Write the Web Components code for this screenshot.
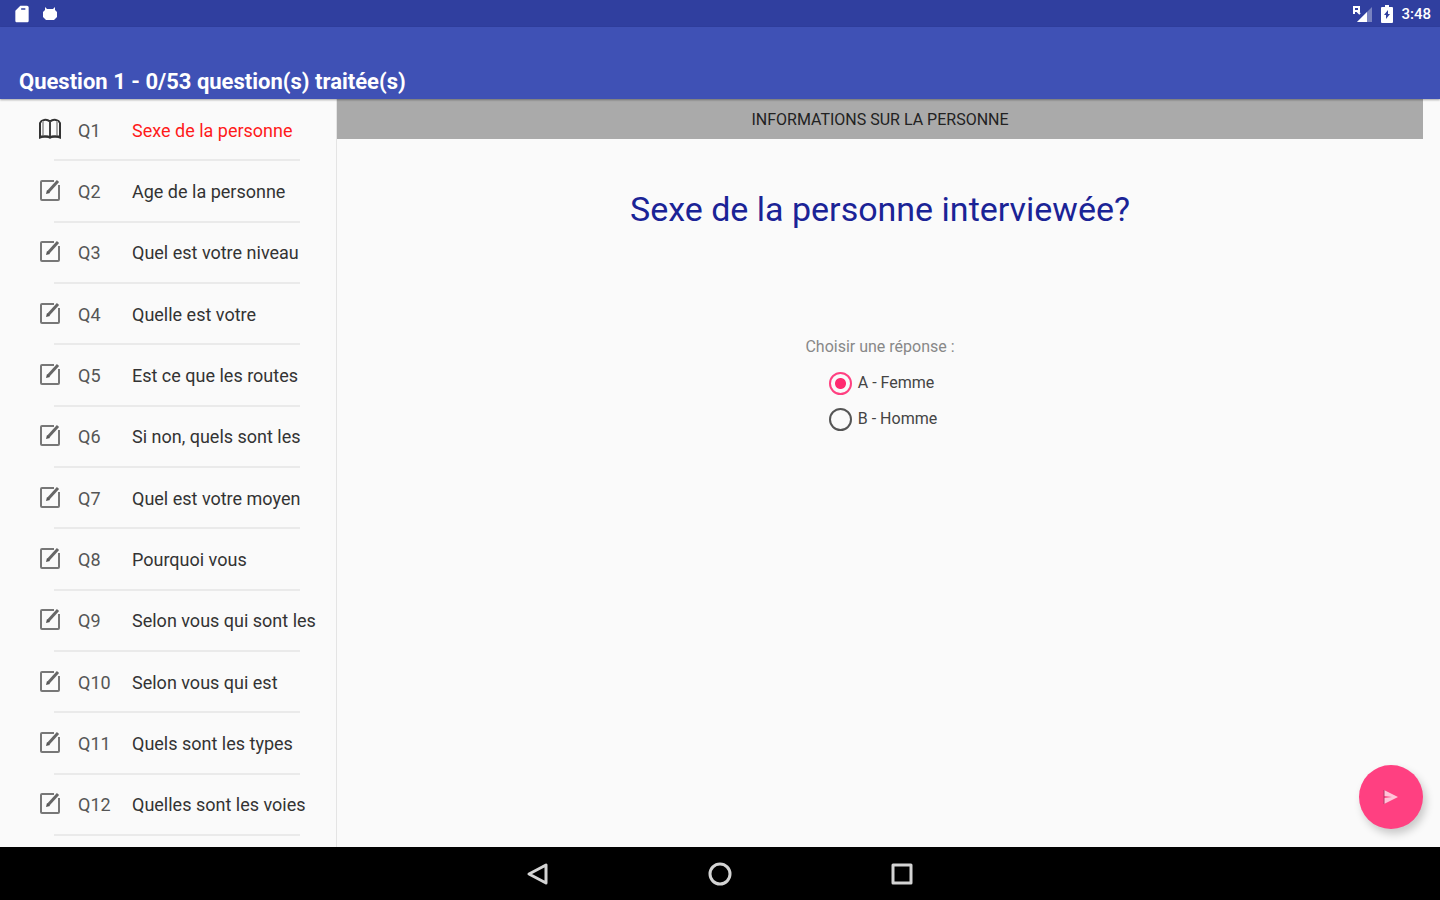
<!DOCTYPE html>
<html lang="fr">
<head>
<meta charset="utf-8">
<meta name="viewport" content="width=device-width, initial-scale=1">
<title>Questionnaire</title>
<style>
    body {
        margin: 0;
        font-family: Roboto, "Liberation Sans", sans-serif;
        color: #333;
        background: #fafafa;
    }
</style>
</head>
<body>
<survey-app>
    <status-bar slot="status" time="3:48"></status-bar>
    <app-bar slot="bar">Question 1 - 0/53 question(s) traitée(s)</app-bar>
    <question-list slot="list">
        <question-item code="Q1" current>Sexe de la personne</question-item>
        <question-item code="Q2">Age de la personne</question-item>
        <question-item code="Q3">Quel est votre niveau</question-item>
        <question-item code="Q4">Quelle est votre</question-item>
        <question-item code="Q5">Est ce que les routes</question-item>
        <question-item code="Q6">Si non, quels sont les</question-item>
        <question-item code="Q7">Quel est votre moyen</question-item>
        <question-item code="Q8">Pourquoi vous</question-item>
        <question-item code="Q9">Selon vous qui sont les</question-item>
        <question-item code="Q10">Selon vous qui est</question-item>
        <question-item code="Q11">Quels sont les types</question-item>
        <question-item code="Q12">Quelles sont les voies</question-item>
    </question-list>
    <question-panel slot="panel" section="INFORMATIONS SUR LA PERSONNE">
        <span slot="title">Sexe de la personne interviewée?</span>
        <answer-group label="Choisir une réponse :" options="A - Femme|B - Homme"></answer-group>
    </question-panel>
    <send-button slot="action"></send-button>
    <nav-bar slot="nav"></nav-bar>
</survey-app>

<script>
function render(host, html) {
    const template = document.createElement('template');
    template.innerHTML = html;
    host.attachShadow({ mode: 'open' });
    host.shadowRoot.appendChild(template.content.cloneNode(true));
}

class SurveyApp extends HTMLElement {
    constructor() {
        super();
        render(this, `
            <style>
                :host {
                    display: flex;
                    flex-direction: column;
                    height: 100vh;
                }
                .body {
                    flex: 1;
                    min-height: 0;
                    display: flex;
                    position: relative;
                }
                ::slotted([slot="panel"]) {
                    flex: 1;
                }
            </style>
            <slot name="status"></slot>
            <slot name="bar"></slot>
            <div class="body">
                <slot name="list"></slot>
                <slot name="panel"></slot>
                <slot name="action"></slot>
            </div>
            <slot name="nav"></slot>
        `);
    }
}

class StatusBar extends HTMLElement {
    constructor() {
        super();
        render(this, `
            <style>
                :host {
                    display: flex;
                    align-items: center;
                    justify-content: space-between;
                    height: 27px;
                    padding: 0 9px 0 12px;
                    background: #303f9f;
                    color: #fff;
                }
                div {
                    display: flex;
                    align-items: center;
                    gap: 10px;
                }
                .right {
                    gap: 8px;
                }
                svg {
                    display: block;
                    fill: #fff;
                }
                time {
                    font-size: 15px;
                    font-weight: 500;
                    line-height: 20px;
                }
            </style>
            <div>
                <svg width="20" height="20" viewBox="0 0 24 24"><path fill-rule="evenodd" d="M18 2h-8L4 8v12c0 1.100.9 2 2 2h12c1.100 0 2-.9 2-2V4c0-1.100-.9-2-2-2zM11 5h5v2h-5z"/></svg>
                <svg width="16" height="16" viewBox="0 0 16 16"><path d="M3 1l2 2h6l2-2v3l2 2v5l-2 2-1 1H4l-1-1-2-2V6l2-2z"/></svg>
            </div>
            <div class="right">
                <svg width="20" height="18" viewBox="0 0 20 18"><path d="M19 2v15H4z" opacity=".35"/><path d="M14 7v10H4z"/><path d="M1 9V2h5v4H2M4 6l3 3" fill="none" stroke="#fff" stroke-width="2"/></svg>
                <svg width="12" height="18" viewBox="0 0 12 18"><path fill-rule="evenodd" d="M4 0h4v2h3q1 0 1 1v14q0 1-1 1H1q-1 0-1-1V3q0-1 1-1h3zM7 5l-4 5h2v4l4-5H7z"/></svg>
                <time></time>
            </div>
        `);
    }

    connectedCallback() {
        this.shadowRoot.querySelector('time').textContent = this.getAttribute('time');
    }
}

class AppBar extends HTMLElement {
    constructor() {
        super();
        render(this, `
            <style>
                :host {
                    display: block;
                    position: relative;
                    z-index: 1;
                    padding: 41px 19px 3px;
                    background: #3f51b5;
                    color: #fff;
                    box-shadow: 0 1px 2px rgba(0, 0, 0, .35);
                }
                h1 {
                    margin: 0;
                    font-size: 22px;
                    font-weight: 700;
                    line-height: 28px;
                }
            </style>
            <h1><slot></slot></h1>
        `);
    }
}

class QuestionList extends HTMLElement {
    constructor() {
        super();
        render(this, `
            <style>
                :host {
                    display: flex;
                    flex-direction: column;
                    box-sizing: border-box;
                    width: 337px;
                    padding: 1px 0 11px;
                    border-right: 1px solid #e4e4e4;
                }
                ::slotted(*) {
                    flex: 1;
                }
            </style>
            <slot></slot>
        `);
        this.setAttribute('role', 'list');
    }
}

const BOOK = '<svg width="24" height="24" viewBox="0 0 24 24"><path d="M12 4.500Q9 2 6 3 3 3.500 2 6v14.500q5-2 10 0 5-2 10 0V6q-1-2.500-4-3-3-1-6 1.500z" fill="none" stroke="#333" stroke-width="2"/><path d="M12 4v17" stroke="#444" stroke-width="2"/><path d="M5 4v15M19 4v15" stroke="#aaa" stroke-width="2"/><path d="M3 19.500h7l2 1 2-1h7" fill="none" stroke="#333" stroke-width="2"/></svg>';
const EDIT = '<svg width="24" height="24" viewBox="0 0 24 24"><path d="M16 3H4q-1 0-1 1v17q0 1 1 1h16q1 0 1-1V7" fill="none" stroke="#777" stroke-width="2"/><path d="M10 14l10-11" stroke="#666" stroke-width="3"/><path d="M8 16l1-4 3 3z" fill="#555"/></svg>';

class QuestionItem extends HTMLElement {
    constructor() {
        super();
        render(this, `
            <style>
                :host {
                    display: flex;
                    flex-direction: column;
                }
                button {
                    flex: 1;
                    display: grid;
                    grid-template-columns: 40px 54px 1fr;
                    align-items: center;
                    padding: 0 0 0 38px;
                    border: 0;
                    background: none;
                    font: inherit;
                    font-size: 18px;
                    line-height: 24px;
                    color: inherit;
                    text-align: left;
                    white-space: nowrap;
                }
                svg {
                    display: block;
                }
                .icon {
                    padding-bottom: 2px;
                }
                .code, .text {
                    padding-top: 2px;
                }
                .code {
                    color: #555;
                }
                :host([current]) .text {
                    color: #ff1a1a;
                }
                hr {
                    margin: 0 36px 0 54px;
                    border: 0;
                    height: 2px;
                    background: #eaeaea;
                }
            </style>
            <button type="button">
                <span class="icon"></span>
                <span class="code"></span>
                <span class="text"><slot></slot></span>
            </button>
            <hr>
        `);
    }

    connectedCallback() {
        this.setAttribute('role', 'listitem');
        this.shadowRoot.querySelector('.icon').innerHTML = this.hasAttribute('current') ? BOOK : EDIT;
        this.shadowRoot.querySelector('.code').textContent = this.getAttribute('code');
    }
}

class QuestionPanel extends HTMLElement {
    constructor() {
        super();
        render(this, `
            <style>
                :host {
                    display: block;
                    padding-right: 17px;
                    text-align: center;
                }
                .section {
                    padding: 11px 0 9px;
                    background: #aaa;
                    color: #222;
                    font-size: 16px;
                    line-height: 20px;
                }
                h2 {
                    margin: 48px 0 106px;
                    color: #1a2396;
                    font-size: 34px;
                    font-weight: 400;
                    line-height: 44px;
                }
            </style>
            <div class="section"></div>
            <h2><slot name="title"></slot></h2>
            <slot></slot>
        `);
    }

    connectedCallback() {
        this.shadowRoot.querySelector('.section').textContent = this.getAttribute('section');
    }
}

class AnswerGroup extends HTMLElement {
    constructor() {
        super();
        render(this, `
            <style>
                fieldset {
                    display: flex;
                    flex-direction: column;
                    align-items: center;
                    margin: 0;
                    padding: 0;
                    border: 0;
                    font-size: 16px;
                    line-height: 20px;
                }
                legend {
                    margin: 0 auto;
                    padding: 0 0 8px;
                    color: #888;
                }
                .options {
                    padding-left: 6px;
                    color: #444;
                }
                label {
                    display: flex;
                    align-items: center;
                    gap: 6px;
                    height: 36px;
                }
                input {
                    appearance: none;
                    box-sizing: border-box;
                    width: 23px;
                    height: 23px;
                    margin: 0;
                    border: 2px solid #555;
                    border-radius: 50%;
                }
                input:checked {
                    border-color: #ff4081;
                    background: radial-gradient(circle, #ff2a70 5px, transparent 6px);
                }
            </style>
            <fieldset>
                <legend></legend>
                <div class="options"></div>
            </fieldset>
        `);
    }

    connectedCallback() {
        this.shadowRoot.querySelector('legend').textContent = this.getAttribute('label');
        const box = this.shadowRoot.querySelector('.options');
        this.getAttribute('options').split('|').forEach((text, i) => {
            const label = document.createElement('label');
            const input = document.createElement('input');
            input.type = 'radio';
            input.name = 'answer';
            input.checked = i === 0;
            label.append(input, text);
            box.appendChild(label);
        });
    }
}

class SendButton extends HTMLElement {
    constructor() {
        super();
        render(this, `
            <style>
                :host {
                    position: absolute;
                    right: 17px;
                    bottom: 18px;
                }
                button {
                    display: flex;
                    align-items: center;
                    justify-content: center;
                    width: 64px;
                    height: 64px;
                    padding: 0;
                    border: 0;
                    border-radius: 50%;
                    background: #ff4081;
                    box-shadow: 3px 5px 8px rgba(0, 0, 0, .2);
                }
            </style>
            <button type="button" aria-label="Envoyer">
                <svg width="16" height="16" viewBox="0 0 16 16"><path d="M1 1l14 7-14 7V9l8-1-8-1z" fill="#ffc4d8"/><path d="M1 1v14" stroke="#b03a66"/></svg>
            </button>
        `);
    }
}

class NavBar extends HTMLElement {
    constructor() {
        super();
        render(this, `
            <style>
                :host {
                    display: flex;
                    align-items: center;
                    justify-content: center;
                    gap: 158px;
                    height: 53px;
                    background: #000;
                }
                button {
                    padding: 0;
                    border: 0;
                    background: none;
                }
                svg {
                    display: block;
                    fill: none;
                    stroke: #d4d4d4;
                    stroke-width: 3;
                    stroke-linejoin: round;
                }
            </style>
            <button type="button" aria-label="Retour"><svg width="24" height="24" viewBox="0 0 24 24"><path d="M20 3v18L3 12z"/></svg></button>
            <button type="button" aria-label="Accueil"><svg width="24" height="24" viewBox="0 0 24 24"><circle cx="12" cy="12" r="10"/></svg></button>
            <button type="button" aria-label="Applications"><svg width="24" height="24" viewBox="0 0 24 24"><path d="M3 3h18v18H3z"/></svg></button>
        `);
    }
}

customElements.define('survey-app', SurveyApp);
customElements.define('status-bar', StatusBar);
customElements.define('app-bar', AppBar);
customElements.define('question-list', QuestionList);
customElements.define('question-item', QuestionItem);
customElements.define('question-panel', QuestionPanel);
customElements.define('answer-group', AnswerGroup);
customElements.define('send-button', SendButton);
customElements.define('nav-bar', NavBar);
</script>
</body>
</html>
